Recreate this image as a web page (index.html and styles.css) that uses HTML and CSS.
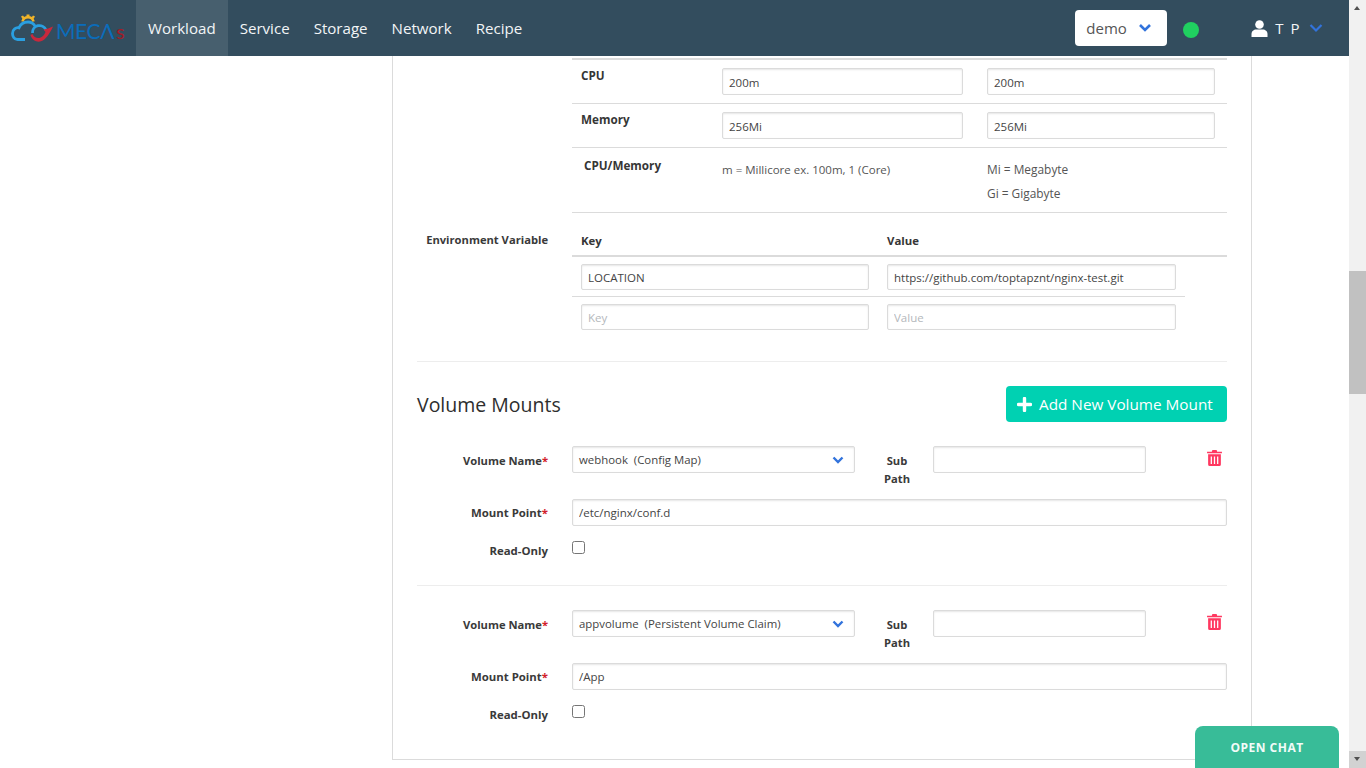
FILE: index.html
```html
<!DOCTYPE html>
<html lang="en">
<head>
  <meta charset="UTF-8" />
  <title>Workload - MECAs</title>
  <link rel="stylesheet" href="styles.css">
</head>
<body>
  <div class="page">
    <nav class="navbar">
      <a class="logo" href="#">
        <svg class="logo-mark" width="44" height="30" viewBox="0 0 44 30">
          <path d="M11.500 8.500 A5.700 5.700 0 0 1 22.500 8.500" fill="none" stroke="#f0b429" stroke-width="2.600"/>
          <path d="M15.500 1.500 H18.500 V4 H15.500 Z M10 3.500 L12 2.500 L13.500 4.500 L11.500 6 Z M24 3.500 L22 2.500 L20.500 4.500 L22.500 6 Z" fill="#f0b429"/>
          <path d="M14 26.500 H6.500 C3 26.500 1.500 23 1.500 20.500 C1.500 16.500 5 14 8 14.800 C9.500 11 13 9 17 9 C20 9 22.500 10.500 24 13" fill="none" stroke="#2a9fe0" stroke-width="2.800"/>
          <path d="M21.500 20 A7 7 0 0 1 35 17" fill="none" stroke="#2a9fe0" stroke-width="2.800"/>
          <path d="M19.500 22 C21 27.500 26 29.500 30 28.300 C35 26.500 39 20 42 13.500 C38.500 15 36 16 32.500 16.500 L34.500 19 C33 22.500 30.500 25 27.500 25 C24.500 25 22.500 23.500 21.500 21 Z" fill="#c8283c"/>
        </svg>
        <span class="logo-text">MEC&Lambda;<span class="logo-s">s</span></span>
      </a>
      <a class="nav-link active" href="#">Workload</a>
      <a class="nav-link" href="#">Service</a>
      <a class="nav-link" href="#">Storage</a>
      <a class="nav-link" href="#">Network</a>
      <a class="nav-link" href="#">Recipe</a>
      <div class="nav-right">
        <div class="ns-select">demo
          <svg class="chev" width="14" height="10" viewBox="0 0 14 10"><path d="M2 2 L7 7 L12 2" fill="none" stroke="#3273dc" stroke-width="2.600"/></svg>
        </div>
        <span class="status-dot"></span>
        <div class="user">
          <svg width="17" height="17" viewBox="0 0 17 17"><circle cx="8.500" cy="4.500" r="4.300" fill="#fff"/><path d="M0.500 17 L0.500 14 C0.500 11 3 9.500 5 9.500 L12 9.500 C14 9.500 16.500 11 16.500 14 L16.500 17 Z" fill="#fff"/></svg>
          <span class="user-name">T P</span>
          <svg class="chev" width="14" height="10" viewBox="0 0 14 10"><path d="M1.500 2 L7 7.500 L12.500 2" fill="none" stroke="#3273dc" stroke-width="2.200"/></svg>
        </div>
      </div>
    </nav>

    <main class="content">
      <section class="panel">
        <div class="res-block">
          <div class="res-row res-row-cpu">
            <b class="res-label">CPU</b>
            <div class="res-col1"><input class="field" value="200m"></div>
            <div class="res-col2"><input class="field" value="200m"></div>
          </div>
          <div class="res-row">
            <b class="res-label">Memory</b>
            <div class="res-col1"><input class="field" value="256Mi"></div>
            <div class="res-col2"><input class="field" value="256Mi"></div>
          </div>
          <div class="res-row res-row-note">
            <b class="res-label note-label">CPU/Memory</b>
            <div class="res-col1"><p class="note">m = Millicore ex. 100m, 1 (Core)</p></div>
            <div class="res-col2">
              <p class="note">Mi = Megabyte</p>
              <p class="note">Gi = Gigabyte</p>
            </div>
          </div>
        </div>

        <div class="env">
          <label class="form-label env-label">Environment Variable</label>
          <div class="env-table">
            <div class="env-head"><b class="env-key">Key</b><b>Value</b></div>
            <div class="env-row env-row-first">
              <input class="field env-key-input" value="LOCATION">
              <input class="field env-val-input" value="https://github.com/toptapznt/nginx-test.git">
            </div>
            <div class="env-row">
              <input class="field env-key-input" placeholder="Key">
              <input class="field env-val-input" placeholder="Value">
            </div>
          </div>
        </div>

        <hr class="divider divider-env">

        <div class="section-head">
          <h2>Volume Mounts</h2>
          <button class="btn-add">
            <svg width="15" height="15" viewBox="0 0 15 15"><path d="M7.500 1.500 L7.500 13.500 M1.500 7.500 L13.500 7.500" stroke="#fff" stroke-width="3.400" stroke-linecap="round"/></svg>
            Add New Volume Mount
          </button>
        </div>

        <div class="mount">
          <div class="mount-row mount-row-top">
            <label class="form-label">Volume Name<i>*</i></label>
            <div class="select"><span>webhook &nbsp;(Config Map)</span>
              <svg width="12" height="8" viewBox="0 0 12 8"><path d="M1.500 1.500 L6 6 L10.500 1.500" fill="none" stroke="#3273dc" stroke-width="2.400"/></svg>
            </div>
            <label class="form-label sub-label">Sub Path</label>
            <input class="field sub-input">
            <svg class="trash" width="15" height="17" viewBox="0 0 14 16"><path d="M0 2.500 H4.500 L5 1 H9 L9.500 2.500 H14 V4 H0 Z M1 5 H13 V14.500 Q13 16 11.500 16 H2.500 Q1 16 1 14.500 Z" fill="#ff3860"/><path d="M4 7 V14 M7 7 V14 M10 7 V14" stroke="#fff" stroke-width="1.200"/></svg>
          </div>
          <div class="mount-row">
            <label class="form-label">Mount Point<i>*</i></label>
            <input class="field grow" value="/etc/nginx/conf.d">
          </div>
          <div class="mount-row mount-row-check">
            <label class="form-label">Read-Only</label>
            <input type="checkbox" class="check">
          </div>
        </div>

        <hr class="divider">

        <div class="mount">
          <div class="mount-row mount-row-top">
            <label class="form-label">Volume Name<i>*</i></label>
            <div class="select"><span>appvolume &nbsp;(Persistent Volume Claim)</span>
              <svg width="12" height="8" viewBox="0 0 12 8"><path d="M1.500 1.500 L6 6 L10.500 1.500" fill="none" stroke="#3273dc" stroke-width="2.400"/></svg>
            </div>
            <label class="form-label sub-label">Sub Path</label>
            <input class="field sub-input">
            <svg class="trash" width="15" height="17" viewBox="0 0 14 16"><path d="M0 2.500 H4.500 L5 1 H9 L9.500 2.500 H14 V4 H0 Z M1 5 H13 V14.500 Q13 16 11.500 16 H2.500 Q1 16 1 14.500 Z" fill="#ff3860"/><path d="M4 7 V14 M7 7 V14 M10 7 V14" stroke="#fff" stroke-width="1.200"/></svg>
          </div>
          <div class="mount-row">
            <label class="form-label">Mount Point<i>*</i></label>
            <input class="field grow" value="/App">
          </div>
          <div class="mount-row mount-row-check">
            <label class="form-label">Read-Only</label>
            <input type="checkbox" class="check">
          </div>
        </div>
      </section>
      <div class="panel-foot"></div>
    </main>
  </div>

  <div class="scrollbar">
    <span class="arrow-up"></span>
    <div class="track"><div class="thumb"></div></div>
    <span class="arrow-down"></span>
  </div>

  <button class="open-chat">OPEN CHAT</button>
</body>
</html>
```

FILE: styles.css
```css
* { box-sizing: border-box; }
html, body { height: 100%; }
body { margin: 0; display: flex; height: 768px; overflow: hidden; background: #fff; font-family: "Open Sans", "Liberation Sans", sans-serif; color: #363636; }
p { margin: 0; }

.page { width: 1349px; height: 768px; overflow: hidden; }

/* navbar */
.navbar { height: 56px; background: #334d5e; display: flex; align-items: stretch; }
.logo { width: 136px; display: flex; align-items: center; padding-left: 11px; text-decoration: none; }
.logo-mark { flex: none; }
.logo-text { font-family: "Lato", sans-serif; font-size: 21px; letter-spacing: -.4px; color: #0b6cba; margin: 4px 0 0 1px; white-space: nowrap; }
.logo-s { color: #a01c28; font-size: 20px; margin-left: 2px; }
.nav-link { display: flex; align-items: center; padding: 0 12px; color: #f2f5f7; font-size: 15.100px; text-decoration: none; }
.nav-link.active { background: #475f6e; }
.nav-right { margin-left: auto; display: flex; align-items: center; padding-right: 26px; }
.ns-select { width: 92px; height: 36px; background: #fff; border-radius: 4px; display: flex; align-items: center; justify-content: space-between; padding: 0 15px 0 11px; font-size: 15px; color: #555; }
.status-dot { width: 16px; height: 16px; border-radius: 50%; background: #20d060; margin: 3px 0 0 16px; }
.user { display: flex; align-items: center; margin-left: 52px; color: #f2f5f7; gap: 7px; font-size: 15px; }
.user-name { letter-spacing: 1.500px; margin-right: 1px; }

/* panel */
.content { height: 712px; }
.panel { margin-left: 392px; width: 860px; height: 703px; border: solid #dbdbdb; border-width: 0 1px; padding: 2px 24px 0; }
.panel-foot { margin-left: 392px; width: 900px; border-top: 1px solid #dbdbdb; }

.field { height: 27px; border: 1px solid #dbdbdb; border-radius: 2px; padding: 1px 6px 0; font: 11.500px "Open Sans", sans-serif; color: #444; background: #fff; outline: none; box-shadow: inset 0 1px 2px rgba(10, 10, 10, .1); }
.field::placeholder { color: #b4b8bc; }
.form-label { font-size: 11.200px; font-weight: 700; color: #3a3a3a; text-align: right; width: 131px; flex: none; }
.form-label i { color: #d21f2b; font-style: normal; }

/* cpu / memory table */
.res-block { margin-left: 155px; border-top: 2px solid #dbdbdb; font-size: 11.700px; }
.res-row { display: flex; height: 44px; padding-top: 8px; border-bottom: 1px solid #dbdbdb; }
.res-row-note { height: 65px; padding-top: 10px; }
.res-label { width: 150px; padding: 0 0 0 9px; margin-top: -1px; font-weight: 700; }
.note-label { padding-left: 12px; }
.res-col1 { width: 265px; }
.res-col2 { width: 228px; }
.res-col1 .field { width: 241px; }
.res-col2 .field { width: 228px; }
.note { color: #555; font-size: 11.500px; line-height: 24px; }
.res-col2 .note { font-size: 11.900px; line-height: 24px; }
.res-row-note .res-col2 { margin-top: -1px; }

/* env vars */
.env { display: flex; }
.env-label { padding-top: 19px; }
.env-table { margin-left: 24px; width: 655px; }
.env-head { height: 44px; padding: 20px 0 0 9px; font-size: 11.400px; border-bottom: 2px solid #dbdbdb; display: flex; }
.env-key { width: 306px; }
.env-row { padding: 7px 0 6px 9px; width: 613px; display: flex; gap: 18px; }
.env-row .field { height: 26px; }
.env-row-first { border-bottom: 1px solid #dbdbdb; }
.env-key-input { width: 288px; }
.env-val-input { width: 289px; }

.divider { border: 0; border-top: 1px solid #ededed; margin: 0; }
.divider-env { margin-top: 25px; }

.section-head { display: flex; justify-content: space-between; align-items: center; margin-top: 24px; }
.section-head h2 { margin: 0; font-size: 19.500px; font-weight: 400; color: #2e2e2e; }
.btn-add { width: 221px; height: 36px; border: 0; border-radius: 4px; background: #00d1b2; color: #fff; font: 15.300px "Open Sans", sans-serif; display: flex; align-items: center; gap: 7px; padding: 0 0 0 11px; }

.mount { padding-top: 24px; height: 163px; }
.mount-row { display: flex; margin-bottom: 13px; align-items: flex-start; }
.mount-row .form-label { font-size: 11.400px; padding-top: 6px; }
.mount-row-top .form-label { font-size: 11.200px; padding-top: 7px; }
.mount-row .sub-label { width: 36px; margin-left: 24px; padding-top: 6px; line-height: 18px; text-align: center; }
.mount-row-top { height: 40px; }
.mount-row-check .form-label { padding-top: 4px; }
.select { width: 283px; height: 27px; margin-left: 24px; border: 1px solid #dbdbdb; border-radius: 2px; display: flex; align-items: center; justify-content: space-between; padding: 0 10px 0 6px; font-size: 11.400px; color: #444; box-shadow: inset 0 1px 2px rgba(10, 10, 10, .1); }
.mount-row > .grow { margin-left: 24px; flex: 1; padding-top: 0; }
.sub-input { width: 213px; margin-left: 18px; }
.trash { margin: 3px 0 0 61px; }
.check { width: 13px; height: 13px; margin: 2px 0 0 24px; }

/* scrollbar, drawn by hand because the page itself doesn't scroll */
.scrollbar { width: 17px; height: 768px; background: #f1f1f1; display: flex; flex-direction: column; }
.arrow-up, .arrow-down { height: 17px; flex: none; display: block; position: relative; }
.arrow-up::after, .arrow-down::after { content: ""; position: absolute; left: 5px; top: 6px; border: 3.500px solid transparent; }
.arrow-up::after { border-bottom: 4px solid #505050; border-top: 0; }
.arrow-down { background: #d2d2d2; }
.arrow-down::after { border-top: 4px solid #505050; border-bottom: 0; }
.track { flex: 1; padding-top: 254px; }
.thumb { height: 123px; background: #c1c1c1; }

.open-chat { position: fixed; left: 1195px; top: 726px; width: 144px; height: 42px; border: 0; border-radius: 8px 8px 0 0; background: #38bc98; color: #f2fbf8; font: 700 12px "Open Sans", sans-serif; letter-spacing: .5px; }
```
